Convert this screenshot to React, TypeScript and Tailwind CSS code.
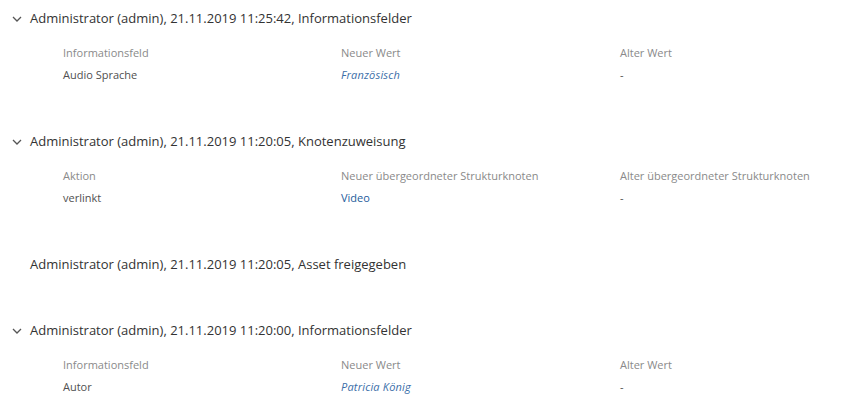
import React from 'react';

type Cell = { text: string; kind?: 'plain' | 'italic' | 'link' };

interface Entry {
  title: string;
  heads?: string[];
  row?: Cell[];
}

const entries: Entry[] = [
  {
    title: 'Administrator (admin), 21.11.2019 11:25:42, Informationsfelder',
    heads: ['Informationsfeld', 'Neuer Wert', 'Alter Wert'],
    row: [{ text: 'Audio Sprache' }, { text: 'Französisch', kind: 'italic' }, { text: '-' }],
  },
  {
    title: 'Administrator (admin), 21.11.2019 11:20:05, Knotenzuweisung',
    heads: ['Aktion', 'Neuer übergeordneter Strukturknoten', 'Alter übergeordneter Strukturknoten'],
    row: [{ text: 'verlinkt' }, { text: 'Video', kind: 'link' }, { text: '-' }],
  },
  {
    title: 'Administrator (admin), 21.11.2019 11:20:05, Asset freigegeben',
  },
  {
    title: 'Administrator (admin), 21.11.2019 11:20:00, Informationsfelder',
    heads: ['Informationsfeld', 'Neuer Wert', 'Alter Wert'],
    row: [{ text: 'Autor' }, { text: 'Patricia König', kind: 'italic' }, { text: '-' }],
  },
];

const Chevron = () => (
  <svg width="10" height="6" viewBox="0 0 10 6" fill="none" className="text-[#555]">
    <path d="M1 1l4 4 4-4" stroke="currentColor" strokeWidth="1.3" />
  </svg>
);

const cellClass = (kind?: Cell['kind']) => {
  if (kind === 'italic') return 'italic text-[#3b6ea8] tracking-[0.2px]';
  if (kind === 'link') return 'text-[#1d5c9c]';
  return 'text-[#505050]';
};

export default function App() {
  return (
    <div className="w-[844px] h-[418px] bg-white overflow-hidden font-['Open_Sans',sans-serif]">
      {entries.map((e, i) => (
        <div key={i} className="pt-[9px] pb-[37px]">
          <div className="flex items-center h-5">
            <div className="w-[30px] flex justify-end pr-[8px]">
              {e.heads && <Chevron />}
            </div>
            <span className="text-[13px] text-[#333]">{e.title}</span>
          </div>
          {e.heads && e.row && (
            <div className="mt-[13px] pl-[63px] grid grid-cols-[278px_279px_1fr] text-[11px]">
              {e.heads.map(h => (
                <div key={h} className="h-[22px] flex items-center text-[#8a8a8a]">{h}</div>
              ))}
              {e.row.map((c, j) => (
                <div key={j} className={`h-[22px] flex items-center ${cellClass(c.kind)}`}>{c.text}</div>
              ))}
            </div>
          )}
        </div>
      ))}
    </div>
  );
}
